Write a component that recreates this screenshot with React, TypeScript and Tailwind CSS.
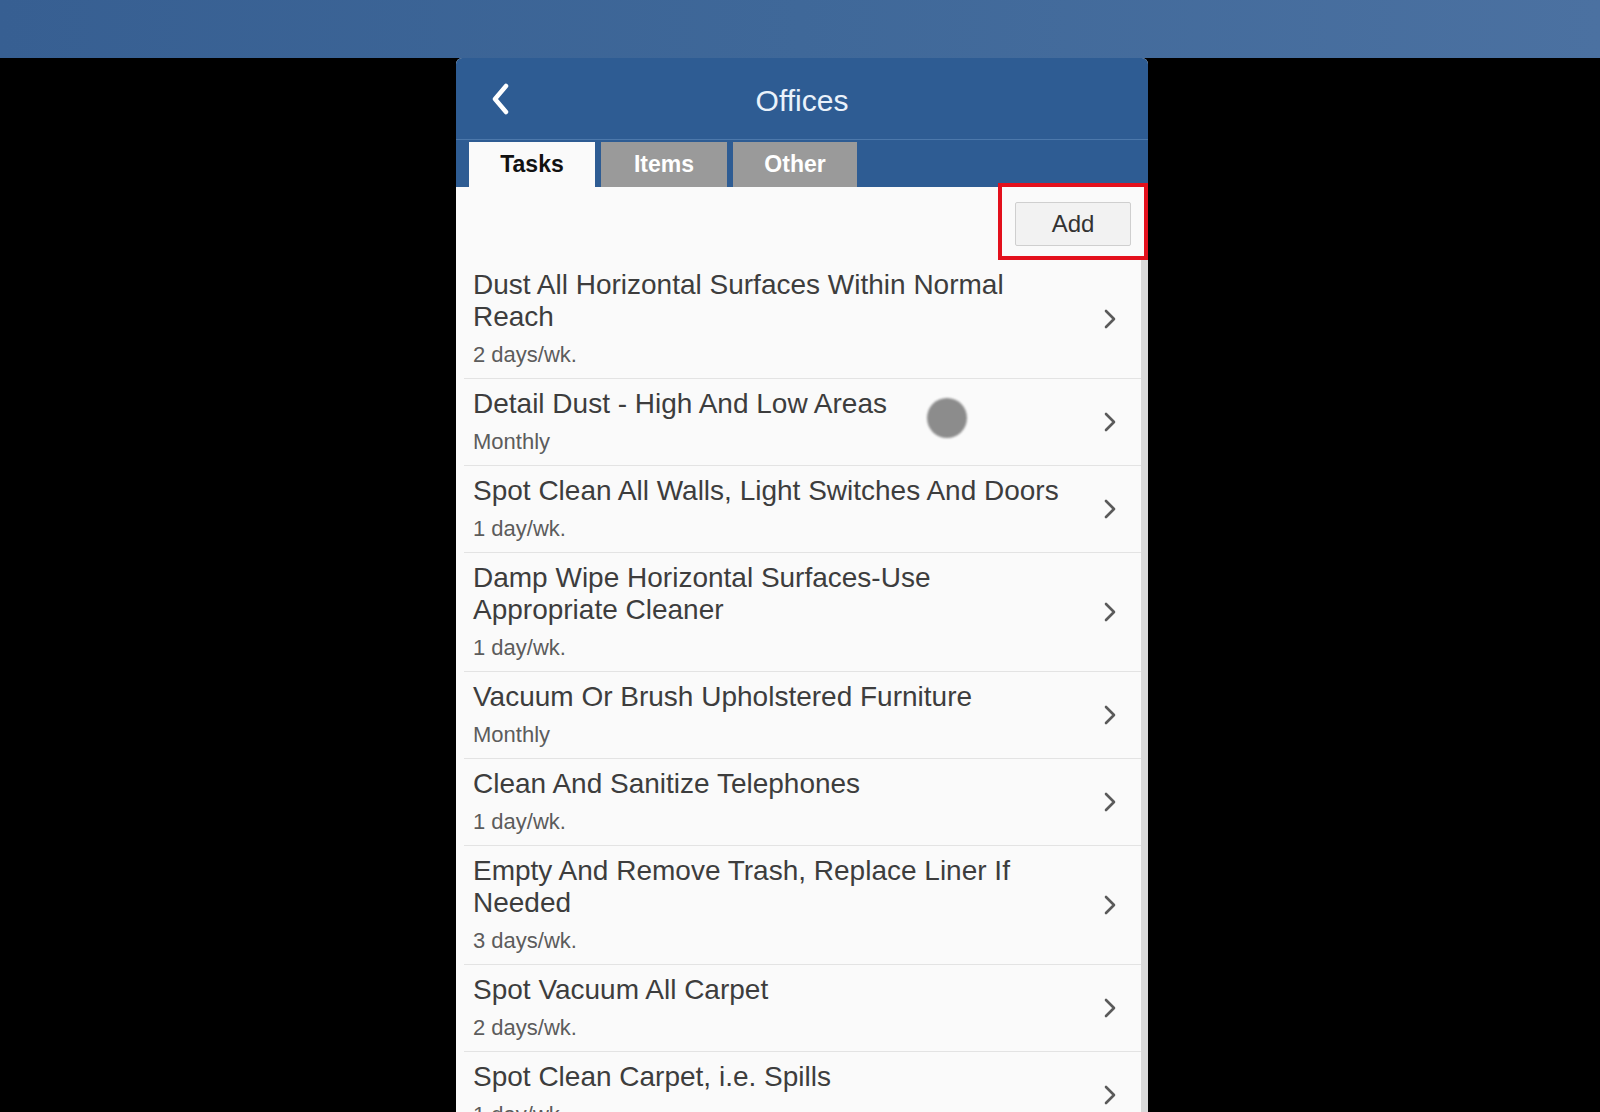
import React from "react";

type Task = { title: string; freq: string };

const tasks: Task[] = [
  { title: "Dust All Horizontal Surfaces Within Normal Reach", freq: "2 days/wk." },
  { title: "Detail Dust - High And Low Areas", freq: "Monthly" },
  { title: "Spot Clean All Walls, Light Switches And Doors", freq: "1 day/wk." },
  { title: "Damp Wipe Horizontal Surfaces-Use Appropriate Cleaner", freq: "1 day/wk." },
  { title: "Vacuum Or Brush Upholstered Furniture", freq: "Monthly" },
  { title: "Clean And Sanitize Telephones", freq: "1 day/wk." },
  { title: "Empty And Remove Trash, Replace Liner If Needed", freq: "3 days/wk." },
  { title: "Spot Vacuum All Carpet", freq: "2 days/wk." },
  { title: "Spot Clean Carpet, i.e. Spills", freq: "1 day/wk." },
];

function Chevron() {
  return (
    <svg width="14" height="22" viewBox="0 0 14 22" fill="none">
      <path d="M3 3 L11 11 L3 19" stroke="#5a5a5a" strokeWidth="2.6" strokeLinecap="round" strokeLinejoin="round" />
    </svg>
  );
}

function BackArrow() {
  return (
    <svg width="22" height="32" viewBox="0 0 22 32" fill="none">
      <path d="M16 3 L5 16 L16 29" stroke="#ffffff" strokeWidth="4.5" strokeLinecap="round" strokeLinejoin="round" />
    </svg>
  );
}

function TaskRow({ task }: { task: Task }) {
  return (
    <div className="ml-2 flex items-center border-b border-[#e3e3e3] pt-[9px] pb-[10px] pl-[9px]">
      <div className="w-[604px]">
        <div className="text-[28px] leading-[32px] text-[#3d3d3d]">{task.title}</div>
        <div className="mt-[9px] text-[22px] leading-[26px] text-[#5c5c5c]">{task.freq}</div>
      </div>
      <div className="flex flex-1 justify-center pl-[2px]">
        <Chevron />
      </div>
    </div>
  );
}

export default function App() {
  return (
    <div
      className="relative h-[1112px] w-[1600px] overflow-hidden bg-black"
      style={{ fontFamily: '"Liberation Sans", Arial, sans-serif' }}
    >
      {/* window title strip */}
      <div className="h-[58px] w-full bg-gradient-to-r from-[#375f92] via-[#3f6899] to-[#4b71a1]" />

      <div className="flex justify-center">
        <div className="relative ml-[4px] w-[692px] overflow-hidden rounded-t-[6px] bg-[#fafafa]">
          {/* header */}
          <div className="bg-[#2e5c93]">
            <div className="relative flex h-[81px] items-center justify-center">
              <div className="absolute left-[34px] top-[25px]">
                <BackArrow />
              </div>
              <span className="pt-[3px] text-[30px] text-[#eaf2fb]">Offices</span>
            </div>
            <div className="h-px bg-[#4c78ab]" />
            <div className="flex gap-[6px] pl-[13px] pt-[2px]">
              <div className="flex h-[45px] w-[126px] items-center justify-center bg-[#fafafa] text-[23px] font-bold text-[#111]">
                Tasks
              </div>
              <div className="flex h-[45px] w-[126px] items-center justify-center bg-[#9a9a9a] text-[23px] font-bold text-white">
                Items
              </div>
              <div className="flex h-[45px] w-[124px] items-center justify-center bg-[#9a9a9a] text-[23px] font-bold text-white">
                Other
              </div>
            </div>
          </div>

          {/* add bar */}
          <div className="flex h-[73px] items-center justify-end pr-[17px]">
            <button className="flex h-[44px] w-[116px] items-center justify-center rounded-[2px] border border-[#cfcfcf] bg-[#f2f2f2] text-[24px] text-[#333]">
              Add
            </button>
          </div>

          {/* task list */}
          <div className="border-r-[7px] border-[#d8d8d8]">
            {tasks.map((t) => (
              <TaskRow key={t.title} task={t} />
            ))}
          </div>

          {/* highlight frame around the add button */}
          <div className="pointer-events-none absolute left-[542px] top-[125px] h-[77px] w-[150px] border-[4px] border-[#e3101c]" />

          {/* touch indicator */}
          <div className="pointer-events-none absolute left-[471px] top-[340px] h-[40px] w-[40px] rounded-full bg-[#8c8c8c] blur-[1px]" />
        </div>
      </div>
    </div>
  );
}
